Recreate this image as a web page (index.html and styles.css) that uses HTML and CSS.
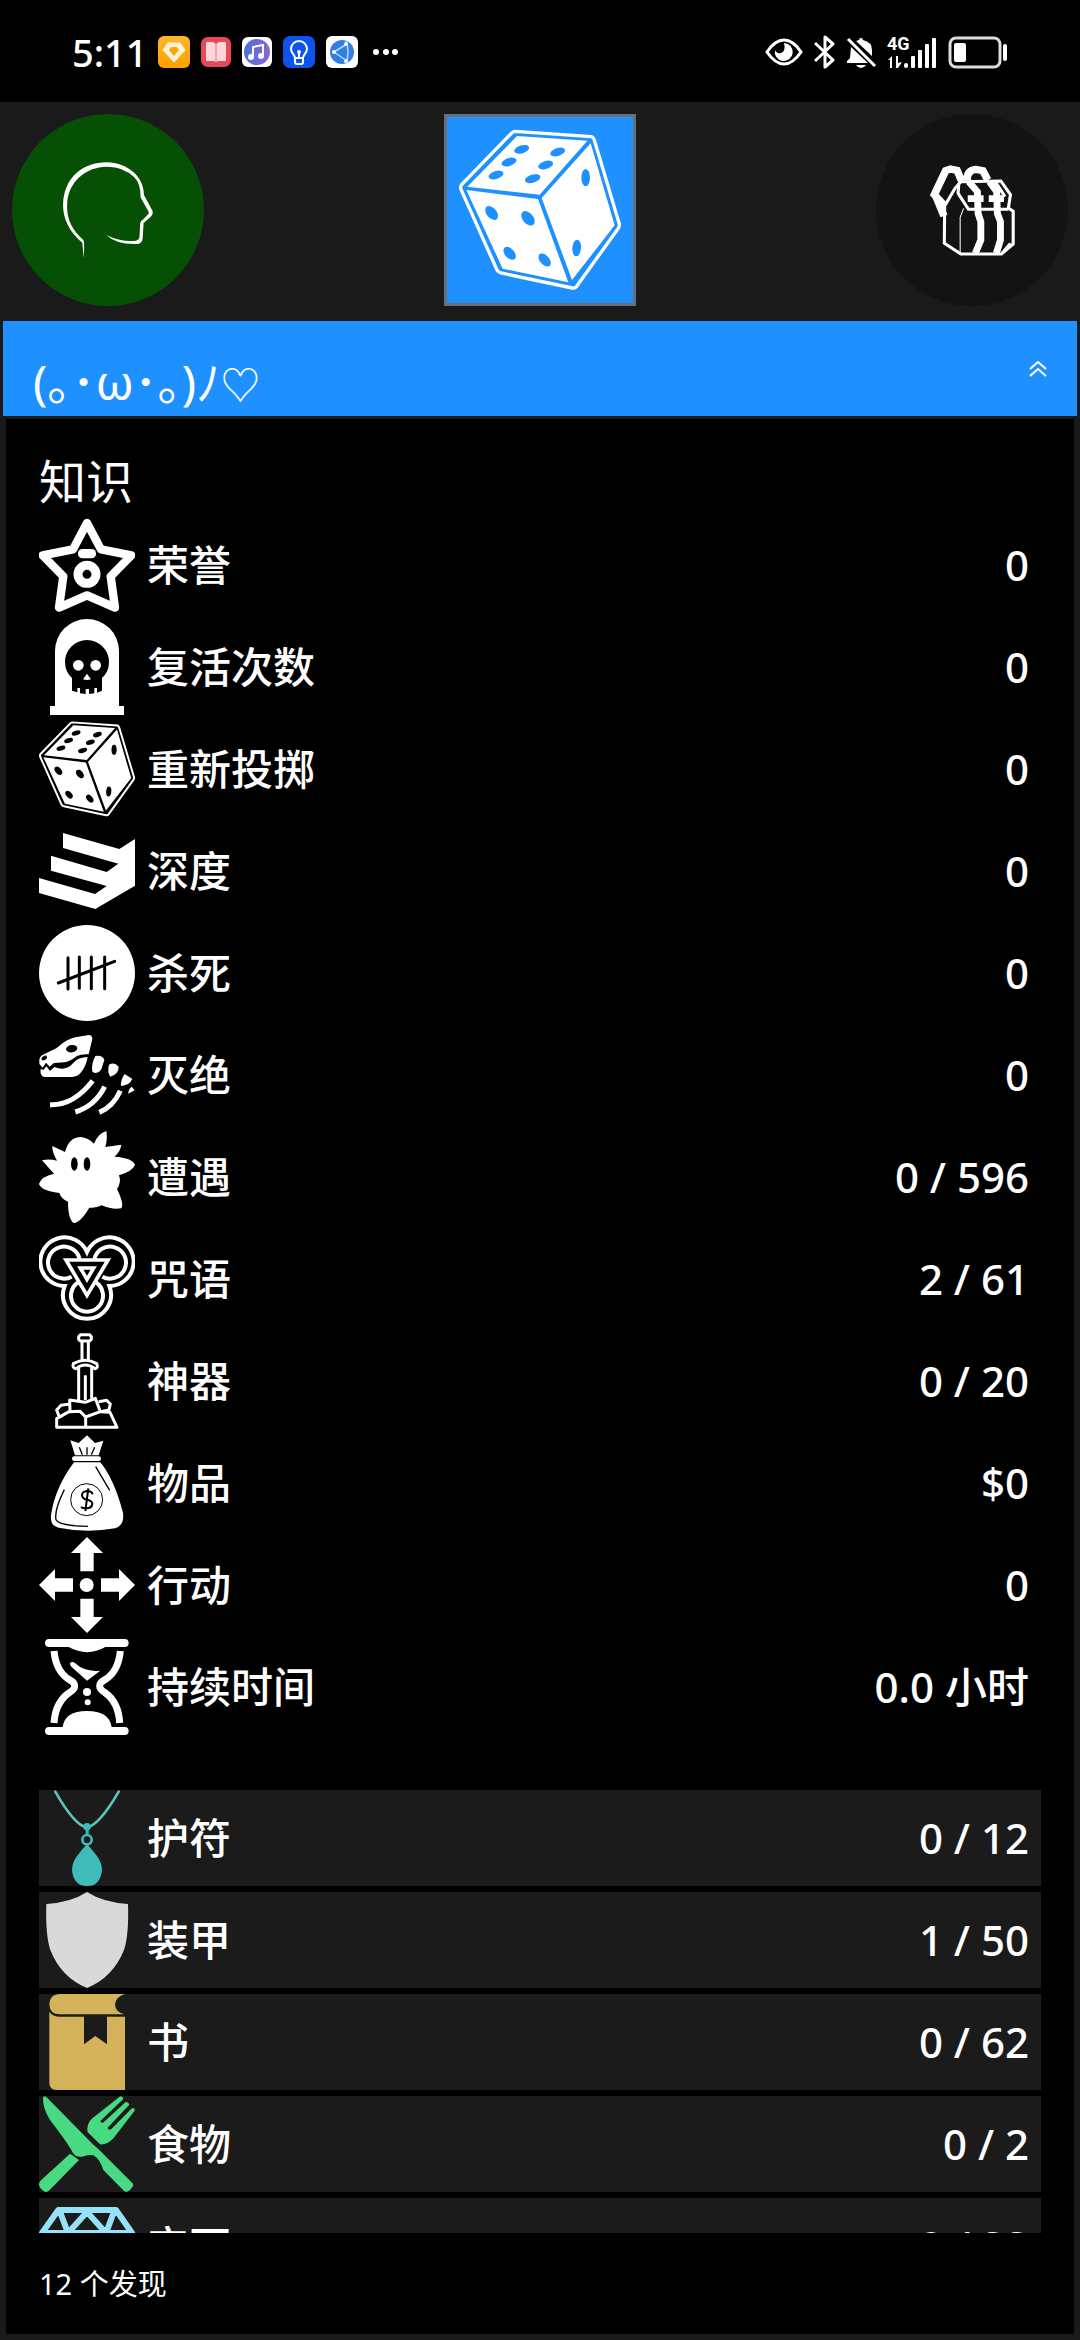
FILE: index.html
```html
<!DOCTYPE html>
<html lang="zh-CN">
<head>
<meta charset="utf-8">
<meta name="viewport" content="width=device-width, initial-scale=1">
<title>知识</title>
<link rel="stylesheet" href="styles.css">
</head>
<body>
<svg class="defs" aria-hidden="true">
  <symbol id="dice" viewBox="57 57 486 486">
    <path d="M225 64 L454 80 Q460 82 463 90 L538 342 Q539 350 534 356 L409 530 Q405 535 397 534 L183 489 Q175 487 171 480 L63 238 Q60 230 65 224 L214 70 Q219 64 225 64Z" fill="none" stroke="#fff" stroke-width="10"/>
    <path d="M231 78 L442 92 L299 254 L82 230Z M79 240 L294 267 L385 517 L188 476Z M305 264 L452 100 L524 346 L396 510Z" fill="#fff"/>
    <g class="pips">
      <ellipse cx="245" cy="118" rx="23" ry="12" transform="rotate(-17 245 118)"/>
      <ellipse cx="207" cy="156" rx="23" ry="12" transform="rotate(-17 207 156)"/>
      <ellipse cx="168" cy="195" rx="23" ry="12" transform="rotate(-17 168 195)"/>
      <ellipse cx="353" cy="126" rx="23" ry="12" transform="rotate(-17 353 126)"/>
      <ellipse cx="317" cy="165" rx="23" ry="12" transform="rotate(-17 317 165)"/>
      <ellipse cx="278" cy="206" rx="24" ry="12" transform="rotate(-17 278 206)"/>
      <ellipse cx="155" cy="309" rx="24" ry="15" transform="rotate(50 155 309)"/>
      <ellipse cx="264" cy="325" rx="25" ry="16" transform="rotate(50 264 325)"/>
      <ellipse cx="209" cy="430" rx="23" ry="14" transform="rotate(48 209 430)"/>
      <ellipse cx="314" cy="450" rx="23" ry="14" transform="rotate(48 314 450)"/>
      <ellipse cx="437" cy="203" rx="13" ry="26"/>
      <ellipse cx="410" cy="414" rx="13" ry="25" transform="rotate(5 410 414)"/>
    </g>
  </symbol>
</svg>

<header class="status">
  <div class="status-left">
    <time class="clock">5:11</time>
    <svg width="32" height="32" viewBox="0 0 32 32"><defs><linearGradient id="or" x2="0" y2="1"><stop stop-color="#ffb62c"/><stop offset="1" stop-color="#ff9f00"/></linearGradient></defs><rect width="32" height="32" rx="6" fill="url(#or)"/><path d="M10 7h12l5 7-11 12L5 14z" fill="#fff3d6" stroke="#fff3d6" stroke-linejoin="round"/><path d="M13 11h6l2 3-5 6-5-6z" fill="#ffa50a"/></svg>
    <svg width="30" height="32" viewBox="0 0 30 32"><rect y="1" width="30" height="30" rx="7" fill="#e54a55"/><path d="M5 6h7l3 2 3-2h7v19h-8l-2 1-2-1H5z" fill="#ffd5da"/><path d="M15 8v17" stroke="#f3a3ac" stroke-width="2"/></svg>
    <svg width="30" height="32" viewBox="0 0 30 32"><defs><linearGradient id="mu"><stop stop-color="#4b71d6"/><stop offset="1" stop-color="#8d68d2"/></linearGradient></defs><rect y="1" width="30" height="30" rx="6" fill="#fff"/><circle cx="15" cy="16" r="13" fill="url(#mu)"/><path d="M11 21V11l10-2v10" fill="none" stroke="#fff" stroke-width="2"/><circle cx="9" cy="21" r="3" fill="#fff"/><circle cx="19" cy="20" r="3" fill="#fff"/></svg>
    <svg width="32" height="32" viewBox="0 0 32 32"><rect width="32" height="32" rx="7" fill="#0b55ee"/><path d="M12 22c0-3-4-5-4-9a8 8 0 0 1 16 0c0 4-4 6-4 9zM12 22v4q0 2 2 2h4q2 0 2-2v-4M16 15v7" fill="none" stroke="#fff" stroke-width="2"/><circle cx="16" cy="16" r="2" fill="#fff"/></svg>
    <svg width="32" height="32" viewBox="0 0 32 32"><rect width="32" height="32" rx="6" fill="#fff"/><circle cx="16" cy="16" r="12" fill="#2f80e2"/><path d="M20 4q4 12 0 24M8 16l13-8M8 16l13 9" fill="none" stroke="#b9dcff" stroke-width="1.5"/><g fill="#fff"><circle cx="20" cy="8" r="2"/><circle cx="8" cy="16" r="2"/><circle cx="20" cy="25" r="2"/></g></svg>
    <svg class="more" width="25" height="32" viewBox="0 0 25 32" fill="#fff"><circle cx="3" cy="16" r="3"/><circle cx="13" cy="16" r="3"/><circle cx="22" cy="16" r="3"/></svg>
  </div>
  <div class="status-right">
    <svg width="38" height="34" viewBox="0 0 38 34"><path d="M2 17Q10 5 19 5t17 12Q28 29 19 29T2 17z" fill="none" stroke="#fff" stroke-width="3"/><path d="M19 8a9 9 0 1 1-9 7q2 4 6 3 5-2 3-10z" fill="#fff"/></svg>
    <svg width="21" height="34" viewBox="0 0 21 34"><path d="M1 8l18 17-8 7V2l8 7L1 26" fill="none" stroke="#fff" stroke-width="3" stroke-linejoin="round"/></svg>
    <svg width="30" height="34" viewBox="0 0 30 34"><path d="M5 12l17 16H1v-2l3-3zM10 6l3-1q0-2 2-2t2 2q9 2 9 10v6zM10 30h10q-2 3-5 3t-5-3z" fill="#fff"/><path d="M2 4l27 27" stroke="#fff" stroke-width="3"/></svg>
    <div class="signal">
      <span class="net">4G</span>
      <svg width="50" height="34" viewBox="0 0 50 34" fill="#fff"><path d="M1 25l4-4v12H3v-8zM9 21h2v7l4-1-4 6H9z"/><rect x="17" y="28" width="4" height="5" rx="2"/><rect x="24" y="21" width="4" height="12" rx="1"/><rect x="31" y="15" width="4" height="18" rx="1"/><rect x="38" y="9" width="4" height="24" rx="1"/><rect x="45" y="3" width="4" height="30" rx="1"/></svg>
    </div>
    <svg width="60" height="34" viewBox="0 0 60 34"><rect x="2" y="3" width="50" height="29" rx="6" fill="none" stroke="#ddd" stroke-width="3"/><rect x="6" y="8" width="12" height="19" rx="2" fill="#fff"/><rect x="55" y="9" width="4" height="17" rx="2" fill="#fff"/></svg>
  </div>
</header>

<main class="app">
  <nav class="tabs">
    <button class="tab tab-head" type="button" aria-label="角色">
      <svg width="96" height="96" viewBox="0 0 96 96"><g transform="scale(.3444 .3333) translate(-174.2 -486)" fill="#fff"><path d="M243 774 L239 728 Q183 680 183 614 C186 530 242 487 310 487 C370 488 418 530 418 585 L443 633 Q445 644 437 651 L417 669 L414 718 Q411 731 400 732 Q340 735 308 705 Q345 724 385 723 Q403 724 405 712 L407 670 Q408 662 416 658 L431 642 Q433 638 430 632 L408 592 Q409 552 390 532 Q358 499 310 500 C248 500 195 548 195 616 Q192 675 242 720 Q246 728 243 774Z"/></g></svg>
    </button>
    <button class="tab tab-dice" type="button" aria-label="骰子">
      <svg width="162" height="162"><use href="#dice"/></svg>
    </button>
    <button class="tab tab-pack" type="button" aria-label="背包">
      <svg width="96" height="96" viewBox="0 0 96 96"><g transform="scale(.3444 .3333) translate(-1115 -486)"><path d="M1175 618 L1145 584 L1178 512 L1192 507 L1211 511 L1225 545 M1150 590 L1173 648 M1240 540 Q1240 510 1266 508 L1286 512 L1300 540" fill="none" stroke="#fff" stroke-width="22"/><path d="M1175 618 L1205 565 L1222 545 L1338 543 L1366 584 L1360 624 L1374 634 L1374 732 L1340 762 L1222 762 L1174 730Z M1216 550 L1214 580 L1244 628 L1360 628 M1322 545 L1350 590 M1340 762 L1366 730" fill="none" stroke="#fff" stroke-width="9"/><path d="M1230 625L1220 652V760" fill="none" stroke="#fff" stroke-width="3"/><path d="M1245 545 L1270 575 L1272 640 L1280 665 V720 L1264 760 M1305 545 L1326 575 L1328 640 L1337 665 V720 L1325 760" fill="none" stroke="#fff" stroke-width="20"/><path d="M1242 596H1288M1303 596H1347" stroke="#fff" stroke-width="20"/></g></svg>
    </button>
  </nav>

  <button class="profile" type="button">
    <span class="profile-name">(｡･ω･｡)ﾉ<span class="heart">♡</span></span>
    <svg class="chevron" width="18" height="16" viewBox="0 0 18 16" fill="none" stroke="#fff" stroke-width="2"><path d="M1 8l8-7 8 7M1 15l8-7 8 7"/></svg>
  </button>

  <section class="panel">
    <h1 class="title">知识</h1>
    <dl class="stats">
      <div class="row">
        <dt><svg class="icon" viewBox="117 231 288 288"><path d="M261 249 L303 328 L394 346 L332 409 L345 503 L261 466 L177 503 L190 409 L128 346 L219 328Z" fill="none" stroke="#fff" stroke-width="25" stroke-linejoin="round"/><rect x="234" y="327" width="54" height="28" rx="13" fill="#fff"/><circle cx="261" cy="403" r="27" fill="none" stroke="#fff" stroke-width="27"/></svg>荣誉</dt>
        <dd>0</dd>
      </div>
      <div class="row">
        <dt><svg class="icon" viewBox="117 537 288 288"><path d="M165 798V633a96 96 0 0 1 192 0V798H372V825H150V798Z" fill="#fff"/><path d="M216 752V714Q195 695 195 666a66 66 0 0 1 132 0Q327 695 306 714V752L291 758V744H283V760L267 762V747H257V762L240 760V744H232V757Z"/><circle cx="235" cy="676" r="16" fill="#fff"/><circle cx="287" cy="676" r="16" fill="#fff"/><path d="M261 701l12 17q-12 4-24 0z" fill="#fff"/></svg>复活次数</dt>
        <dd>0</dd>
      </div>
      <div class="row">
        <dt><svg class="icon"><use href="#dice"/></svg>重新投掷</dt>
        <dd>0</dd>
      </div>
      <div class="row">
        <dt><svg class="icon" viewBox="117 39 288 288"><path d="M189 69L358 117L405 87V227L286 297L117 249V204L285 252L320 228L153 182V137L320 186L355 161L189 114Z" fill="#fff"/></svg>深度</dt>
        <dd>0</dd>
      </div>
      <div class="row">
        <dt><svg class="icon" viewBox="117 345 288 288"><circle cx="261" cy="489" r="144" fill="#fff"/><path d="M204 443V537M238 441V535M274 441V536M314 441V536M175 519L344 454" stroke="#000" stroke-width="9" stroke-linecap="round"/></svg>杀死</dt>
        <dd>0</dd>
      </div>
      <div class="row">
        <dt><svg class="icon" viewBox="117 651 288 288"><path d="M118 748Q122 736 132 733L169 715Q202 686 226 682L267 675Q277 676 277 687L266 733Q243 732 231 738Q207 756 193 757L162 759L149 770L138 758L128 773L118 762ZM122 777L130 780L139 769L150 783L163 771Q198 785 219 760Q235 741 263 741Q258 772 239 792Q230 801 217 801H132Q119 797 122 777Z" fill="#fff"/><ellipse cx="215" cy="716" rx="17" ry="11" transform="rotate(-8 215 716)"/><ellipse cx="133" cy="744" rx="9" ry="6" transform="rotate(-30 133 744)"/><path d="M286 738Q308 735 313 750L304 778Q292 795 277 785Q273 763 286 738ZM327 764Q343 754 356 770Q357 791 331 800Q321 787 327 764ZM374 792L397 807Q389 826 363 828Q362 808 374 792ZM395 830L404 841L385 851Q384 839 395 830Z" fill="#fff"/><path d="M278 812Q220 887 150 884M314 830Q285 888 226 906M361 842Q340 889 298 907" fill="none" stroke="#fff" stroke-width="15"/></svg>灭绝</dt>
        <dd>0</dd>
      </div>
      <div class="row">
        <dt><svg class="icon" viewBox="117 957 288 288"><path d="M195 1026Q207 981 243 981Q264 983 282 1001Q294 970 319 963Q323 985 316 1011L364 1004Q361 1026 343 1040Q397 1043 405 1065Q397 1084 357 1096Q365 1117 351 1137Q373 1182 364 1195Q337 1200 305 1186Q290 1195 268 1193Q241 1238 221 1239Q204 1227 204 1175Q185 1169 178 1149Q121 1141 117 1121Q124 1099 162 1091L126 1051Q147 1045 171 1052Q156 1026 157 1008Z" fill="#fff"/><ellipse cx="223" cy="1062" rx="10" ry="20"/><ellipse cx="261" cy="1062" rx="10" ry="20"/></svg>遭遇</dt>
        <dd>0 / 596</dd>
      </div>
      <div class="row">
        <dt><svg class="icon" viewBox="117 33 288 288" fill="none" stroke="#fff"><path d="M261 96A73 73 0 1 0 194 198A72 72 0 1 0 328 198A73 73 0 1 0 261 96Z" stroke-width="12"/><path d="M239 118A48 48 0 1 0 215 170M283 118A48 48 0 1 1 307 170M236 186A48 48 0 1 0 286 186" stroke-width="12"/><path d="M198 120H324L261 226Z" stroke-width="11"/><path d="M241 144H281L261 178Z" stroke-width="11"/></svg>咒语</dt>
        <dd>2 / 61</dd>
      </div>
      <div class="row">
        <dt><svg class="icon" viewBox="117 339 288 288" fill="none" stroke="#fff" stroke-width="9" stroke-linejoin="round"><path d="M241 344H269L274 350V358L269 363H241L236 358V350ZM246 365V421M265 365V421M228 446Q216 444 220 431Q256 411 290 431Q296 444 285 446Q255 424 228 446ZM236 442V540M275 442V536M256 466V540"/><path d="M209 540L256 547L286 535L301 575L257 591L240 574L210 575ZM296 545L320 541L331 552L327 570L302 575L330 577L351 622H170V596L207 575M209 552L183 556L170 570L177 589M257 590V620"/></svg>神器</dt>
        <dd>0 / 20</dd>
      </div>
      <div class="row">
        <dt><svg class="icon" viewBox="117 645 288 288"><path d="M225 706L211 661L236 669L261 646L285 669L310 662L296 706ZM222 727H301Q343 778 369 879Q374 916 345 925Q260 940 176 923Q150 918 153 886Q165 803 222 727Z" fill="#fff"/><rect x="216" y="709" width="87" height="14" rx="7" fill="#fff"/><g fill="none" stroke="#000" stroke-width="3"><circle cx="260" cy="839" r="48"/><path d="M238 682L247 704M261 682V704M284 682L274 704M287 740L329 811M193 809Q162 872 168 899Q178 918 264 919" stroke-width="4"/><path d="M278 823Q276 813 260 813Q246 815 246 826Q248 837 261 839Q277 842 277 852Q275 865 259 865Q247 865 243 861M265 805L256 873" stroke-width="6"/></g></svg>物品</dt>
        <dd>$0</dd>
      </div>
      <div class="row">
        <dt><svg class="icon" viewBox="117 21 288 288" fill="#fff"><path d="M261 21L309 69H281V124H241V69H213ZM261 309L213 261H241V206H281V261H309ZM117 165L165 117V145H219V185H165V213ZM405 165L357 213V185H303V145H357V117Z"/><circle cx="260" cy="165" r="21"/></svg>行动</dt>
        <dd>0</dd>
      </div>
      <div class="row">
        <dt><svg class="icon" viewBox="117 327 288 288" fill="#fff"><rect x="135" y="327" width="251" height="24" rx="12"/><rect x="135" y="591" width="251" height="24" rx="12"/><path d="M206 351H316Q262 382 206 351ZM188 591Q194 543 261 543T335 591ZM211 398Q217 393 226 400Q254 427 301 422L261 452L215 411Q208 402 211 398Z"/><path d="M162 363Q168 425 208 449Q240 467 208 488Q166 517 162 579M361 363Q355 425 315 449Q283 467 315 488Q356 517 359 579" fill="none" stroke="#fff" stroke-width="21"/><circle cx="261" cy="486" r="12"/><circle cx="263" cy="517" r="9"/></svg>持续时间</dt>
        <dd>0.0 小时</dd>
      </div>
    </dl>

    <ul class="items">
      <li><button class="row item" type="button">
        <svg class="icon" viewBox="117 60 288 288"><g fill="none" stroke="#5dc2b8" stroke-width="8" stroke-linecap="round"><path d="M166 65Q223 166 261 173Q299 164 356 65"/></g><g fill="#3fbcba"><circle cx="261" cy="170" r="11"/><path d="M257 170h9v26h-9zM261 223Q274 236 293 261Q306 280 306 302Q300 348 261 348T216 302Q216 280 229 261Q248 236 261 223Z"/></g><circle cx="261" cy="209" r="14" fill="none" stroke="#3fbcba" stroke-width="8"/></svg>
        <span class="label">护符</span><span class="value">0 / 12</span></button></li>
      <li><button class="row item" type="button">
        <svg class="icon" viewBox="117 366 288 288"><path d="M261 366Q309 397 384 402Q387 495 372 540Q339 622 261 654Q183 622 151 540Q136 495 139 402Q214 397 261 366Z" fill="#d9d9d9"/></svg>
        <span class="label">装甲</span><span class="value">1 / 50</span></button></li>
      <li><button class="row item" type="button">
        <svg class="icon" viewBox="117 672 288 288"><path d="M179 672H375Q346 681 345 704Q346 725 373 733H179Q149 733 148 703Q149 673 179 672ZM148 725Q158 740 179 740H252V823L286 798L321 823V740H375V960H168Q149 959 148 940Z" fill="#d4b25a"/></svg>
        <span class="label">书</span><span class="value">0 / 62</span></button></li>
      <li><button class="row item" type="button">
        <svg class="icon" viewBox="117 48 288 288" fill="#48d983"><path d="M130 50Q135 46 142 54L281 195Q296 207 319 231L397 309Q402 315 398 320Q392 330 382 335Q376 337 370 331L310 270Q300 237 280 226Q266 222 246 230Q230 233 219 219Q204 190 150 120Q125 78 130 50ZM210 221L237 240L149 330Q138 341 128 331Q118 323 117 314Q116 308 123 301ZM263 157Q258 133 277 115L358 51Q367 45 370 57L302 122Q299 129 309 128L377 66Q385 64 388 74L323 143Q325 153 334 147L394 86Q402 80 405 91L341 174Q322 195 300 193Q289 182 263 157Z"/></svg>
        <span class="label">食物</span><span class="value">0 / 2</span></button></li>
      <li><button class="row item" type="button">
        <svg class="icon" viewBox="117 354 288 288" fill="none" stroke="#97e2fb" stroke-width="18" stroke-linejoin="round"><path d="M175 390H348L396 459L261 632L126 459ZM126 459H396M178 390L204 459L261 396L318 459L344 390M204 459L261 632L318 459"/></svg>
        <span class="label">宝石</span><span class="value">0 / 33</span></button></li>
    </ul>
    <p class="found">12 个发现</p>
  </section>
</main>
</body>
</html>
```
FILE: styles.css
```css
* { box-sizing: border-box; }

body {
  margin: 0;
  height: 100vh;
  display: flex;
  flex-direction: column;
  background: #000;
  color: #fff;
  font-family: "Noto Sans", "Noto Sans CJK SC", sans-serif;
  font-size: 42px;
  font-weight: 500;
}

button {
  border: 0;
  padding: 0;
  color: inherit;
  font: inherit;
  cursor: pointer;
}

svg { display: block; flex: none; }
.defs { position: absolute; width: 0; height: 0; }
.pips { fill: var(--pip, #000); }

/* Status bar */
.status {
  flex: none;
  height: 104px;
  margin-bottom: -2px;
  padding: 0 72px;
  display: flex;
  justify-content: space-between;
  align-items: center;
}
.status-left, .status-right { display: flex; align-items: center; gap: 11px; }
.clock { width: 75px; font-size: 38px; line-height: 52px; white-space: nowrap; }
.more { margin-left: 4px; }
.signal { display: grid; }
.signal > * { grid-area: 1 / 1; }
.net { font: bold 18px/18px "Liberation Sans Narrow", "Roboto", sans-serif; }

/* App */
.app {
  flex: 1;
  min-height: 0;
  display: flex;
  flex-direction: column;
  background: #1a1a1a;
}
.tabs {
  flex: none;
  padding: 12px 12px 15px;
  display: flex;
  justify-content: space-between;
}
.tab {
  width: 192px;
  height: 192px;
  display: grid;
  place-items: center;
  border-radius: 50%;
}
.tab-head { background: #065006; }
.tab-pack { background: #131313; }
.tab-dice {
  --pip: #1e90ff;
  background: #1e90ff;
  border: 3px solid #66707a;
  border-radius: 0;
}

.profile {
  flex: none;
  height: 95px;
  margin: 0 3px 3px;
  padding: 0 30px;
  display: flex;
  justify-content: space-between;
  align-items: center;
  background: #1e90ff;
}
.profile-name { padding-top: 30px; font-size: 48px; font-weight: 400; line-height: 64px; }
.heart { font-size: 40px; }

.panel {
  flex: 1;
  min-height: 0;
  margin: 0 6px 6px;
  padding: 26px 33px 0;
  display: flex;
  flex-direction: column;
  background: #000;
}
.title { margin: 0; font-size: 47px; font-weight: 400; line-height: 72px; }

.stats {
  flex: none;
  margin: 0 0 49px;
  display: flex;
  flex-direction: column;
  gap: 6px;
}
.row {
  height: 96px;
  padding-right: 12px;
  display: flex;
  align-items: center;
  line-height: 60px;
}
.icon { width: 96px; height: 96px; }
.stats dt { flex: 1; display: flex; align-items: center; gap: 12px; }
.stats dd { margin: 0; }

.items {
  flex: 1;
  min-height: 0;
  overflow: hidden;
  list-style: none;
  margin: 0;
  padding: 6px 0 0;
  display: flex;
  flex-direction: column;
  gap: 6px;
}
.item { width: 100%; gap: 12px; background: #1b1b1b; text-align: left; }
.label { flex: 1; }

.found { flex: none; margin: 0; padding: 29px 0 28px; font-size: 29px; font-weight: 400; line-height: 44px; }
```
